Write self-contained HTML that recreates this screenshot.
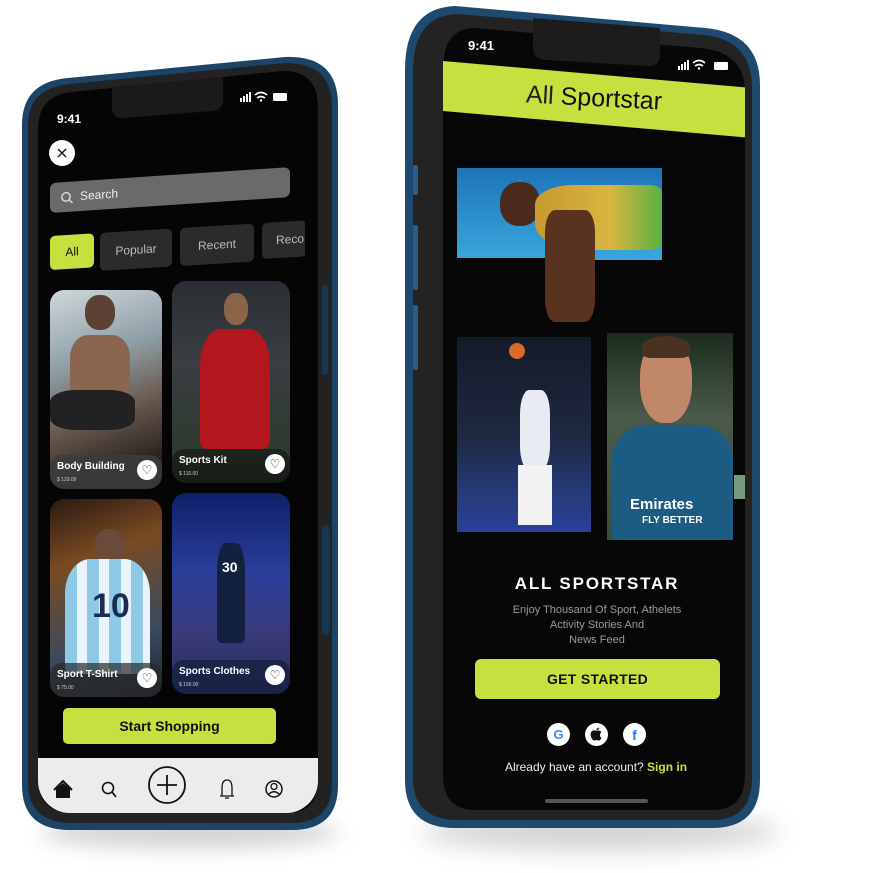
<!DOCTYPE html>
<html><head><meta charset="utf-8"><style>
*{margin:0;padding:0;box-sizing:border-box}
body{width:886px;height:873px;background:#fff;position:relative;overflow:hidden;font-family:"Liberation Sans",sans-serif}
.a{position:absolute}
.t{color:#fff;font-weight:bold}
.chip{position:absolute;background:#2b2b2b;color:#bbb;font-size:12px;border-radius:5px;display:flex;align-items:center;justify-content:center}
.card{position:absolute;border-radius:14px;overflow:hidden}
.lab{position:absolute;left:0;right:0;bottom:0;height:34px;background:rgba(60,60,60,.85);border-radius:12px}
.lab b{position:absolute;left:7px;top:6px;color:#fff;font-size:10px}
.lab i{position:absolute;left:7px;top:22px;color:#ccc;font-size:5px;font-style:normal}
.hrt{position:absolute;right:5px;top:5px;width:20px;height:20px;border-radius:50%;background:#fff;display:flex;align-items:center;justify-content:center}
.soc{position:absolute;width:23px;height:23px;border-radius:50%;background:#fff;display:flex;align-items:center;justify-content:center;font-weight:bold;font-size:13px}
</style></head><body>
<div class="a" style="left:40px;top:818px;width:300px;height:30px;border-radius:50%;background:rgba(0,0,0,.18);filter:blur(10px)"></div>
<div class="a" style="left:420px;top:815px;width:360px;height:35px;border-radius:50%;background:rgba(0,0,0,.18);filter:blur(12px)"></div>

<svg class="a" style="left:0;top:0" width="886" height="873">
<path d="M22 125 Q22 82 68 78 L285 57 Q338 55 338 105 L338 785 Q338 830 292 830 L70 830 Q22 830 22 785 Z" fill="#1c4466"/>
<path d="M28 125 Q28 88 70 84 L284 63 Q332 62 332 107 L332 782 Q332 823 292 823 L72 823 Q28 823 28 782 Z" fill="#222"/>
<path d="M38 130 Q38 95 72 92 L282 71 Q318 70 318 108 L318 780 Q318 813 286 813 L74 813 Q38 813 38 780 Z" fill="#050505"/>
<path d="M112 87 L223 77 L223 100 Q223 110 212 111 L124 118 Q112 119 112 108 Z" fill="#1a1a1a"/>
<rect x="322" y="285" width="6" height="90" rx="3" fill="#17364f"/>
<rect x="322" y="525" width="8" height="110" rx="4" fill="#17364f"/>
<path d="M405 70 Q405 8 455 6 L705 28 Q760 33 760 85 L760 780 Q760 828 712 828 L455 828 Q405 828 405 780 Z" fill="#1d4a6e"/>
<path d="M413 72 Q413 15 458 14 L704 35 Q752 40 752 88 L752 778 Q752 820 712 820 L458 820 Q413 820 413 778 Z" fill="#232323"/>
<path d="M443 70 Q443 28 475 28 L700 48 Q745 52 745 92 L745 775 Q745 810 712 810 L476 810 Q443 810 443 775 Z" fill="#070707"/>
<path d="M533 18 L660 28 L660 55 Q660 66 648 66 L546 60 Q533 59 533 48 Z" fill="#1c1c1c"/>
<rect x="413" y="165" width="5" height="30" rx="2" fill="#2c5d85"/>
<rect x="413" y="225" width="5" height="65" rx="2" fill="#2c5d85"/>
<rect x="413" y="305" width="5" height="65" rx="2" fill="#2c5d85"/>
</svg>

<div class="a t" style="left:57px;top:112px;font-size:12px">9:41</div>
<svg class="a" style="left:240px;top:90px" width="50" height="14"><rect x="0" y="8" width="2" height="4" fill="#fff"/><rect x="3" y="6" width="2" height="6" fill="#fff"/><rect x="6" y="4" width="2" height="8" fill="#fff"/><rect x="9" y="2" width="2" height="10" fill="#fff"/><path d="M15 5 Q21 0 27 5 M17 8 Q21 5 25 8" stroke="#fff" stroke-width="1.6" fill="none"/><circle cx="21" cy="10.5" r="1.2" fill="#fff"/><rect x="33" y="3" width="14" height="8" rx="1.5" fill="#fff"/></svg>
<div class="a" style="left:49px;top:140px;width:26px;height:26px;border-radius:50%;background:#fff"></div>
<svg class="a" style="left:49px;top:140px" width="26" height="26"><path d="M9 9 L17 17 M17 9 L9 17" stroke="#111" stroke-width="1.4"/></svg>
<div class="a" style="left:50px;top:183px;width:240px;height:30px;background:#6a6a6a;border-radius:6px;transform:skewY(-3.8deg);transform-origin:0 0">
  <svg class="a" style="left:10px;top:9px" width="14" height="14"><circle cx="6" cy="6" r="4.2" stroke="#ddd" stroke-width="1.4" fill="none"/><path d="M9 9 L12.5 12.5" stroke="#ddd" stroke-width="1.4"/></svg>
  <div class="a" style="left:30px;top:8px;color:#eee;font-size:12px">Search</div>
</div>
<div style="position:absolute;left:0;top:0;transform:skewY(-3.5deg);transform-origin:50px 250px">
<div class="chip" style="left:50px;top:236px;width:44px;height:34px;background:#c5e03f;color:#111">All</div>
<div class="chip" style="left:100px;top:236px;width:72px;height:38px">Popular</div>
<div class="chip" style="left:180px;top:236px;width:74px;height:38px">Recent</div>
<div class="chip" style="left:262px;top:236px;width:45px;height:36px;justify-content:flex-start;padding-left:14px">Reco</div>
</div>
<div class="a" style="left:305px;top:205px;width:13px;height:70px;background:#050505"></div>

<div class="card" style="left:50px;top:290px;width:112px;height:199px;background:linear-gradient(160deg,#cfd8dc 0%,#8e9ea6 35%,#6b5b50 60%,#2a2522 85%)">
<div class="a" style="left:35px;top:5px;width:30px;height:35px;border-radius:45%;background:#5c4234"></div>
<div class="a" style="left:20px;top:45px;width:60px;height:75px;border-radius:30%;background:#8a6650"></div>
<div class="a" style="left:0px;top:100px;width:85px;height:40px;border-radius:30%;background:#222"></div>
<div class="lab"><b>Body Building</b><i>$ 129.00</i><div class="hrt"><span style="font-size:12px;color:#222">♡</span></div></div></div>
<div class="card" style="left:172px;top:281px;width:118px;height:202px;background:linear-gradient(180deg,#2a2d33 0%,#3a3d42 40%,#2e3a2e 85%,#1c2a1a 100%)">
<div class="a" style="left:52px;top:12px;width:24px;height:32px;border-radius:45%;background:#8a6448"></div>
<div class="a" style="left:28px;top:48px;width:70px;height:120px;border-radius:30% 30% 8px 8px;background:#b3161d"></div>
<div class="lab" style="background:rgba(20,20,20,.6)"><b>Sports Kit</b><i>$ 110.00</i><div class="hrt"><span style="font-size:12px;color:#222">♡</span></div></div></div>
<div class="card" style="left:50px;top:499px;width:112px;height:198px;background:linear-gradient(160deg,#2a1a12 0%,#7a4a22 30%,#3a4a5e 70%,#1c2430 100%)">
<div class="a" style="left:45px;top:30px;width:30px;height:36px;border-radius:45%;background:#6a4a38"></div>
<div class="a" style="left:15px;top:60px;width:85px;height:115px;border-radius:30% 30% 8px 8px;background:repeating-linear-gradient(90deg,#8ec9e8 0 12px,#e8f4fa 12px 22px)"></div>
<div class="a t" style="left:42px;top:88px;font-size:34px;color:#1c2c50">10</div>
<div class="lab" style="background:rgba(40,40,40,.7)"><b>Sport T-Shirt</b><i>$ 75.00</i><div class="hrt"><span style="font-size:12px;color:#222">♡</span></div></div></div>
<div class="card" style="left:172px;top:493px;width:118px;height:201px;background:linear-gradient(180deg,#0e1f6a 0%,#2a3f9a 40%,#3a3a7a 70%,#24305a 100%)">
<div class="a" style="left:45px;top:50px;width:28px;height:100px;border-radius:30% 30% 5px 5px;background:#142040"></div>
<div class="a t" style="left:50px;top:66px;font-size:14px">30</div>
<div class="lab" style="background:rgba(20,30,60,.7)"><b>Sports Clothes</b><i>$ 156.00</i><div class="hrt"><span style="font-size:12px;color:#222">♡</span></div></div></div>

<div class="a" style="left:63px;top:708px;width:213px;height:36px;background:#c5e03f;border-radius:5px;text-align:center;line-height:36px;font-size:14px;font-weight:bold;color:#111">Start Shopping</div>

<div class="a" style="left:38px;top:758px;width:280px;height:55px;background:#ececec;border-radius:0 0 32px 32px"></div>
<svg class="a" style="left:38px;top:758px" width="280" height="60">
<path d="M18 40 L18 31 L25 25 L32 31 L32 40 Z" fill="#111"/><path d="M16 32 L25 23 L34 32" stroke="#111" stroke-width="2" fill="none"/>
<circle cx="70" cy="30" r="5.5" stroke="#111" stroke-width="1.6" fill="none"/><path d="M74 34 L78 39" stroke="#111" stroke-width="1.8"/>
<circle cx="129" cy="27" r="18" stroke="#111" stroke-width="1.8" fill="none"/><path d="M129 17 V37 M119 27 H139" stroke="#111" stroke-width="1.8"/>
<path d="M184 38 L184 30 Q184 22 189 22 Q194 22 194 30 L194 38 Z M182 38 H196 M187 40 H191" stroke="#111" stroke-width="1.3" fill="none"/>
<circle cx="236" cy="31" r="8" stroke="#111" stroke-width="1.5" fill="none"/><circle cx="236" cy="28.5" r="3" stroke="#111" stroke-width="1.3" fill="none"/><path d="M230.5 36.5 Q236 31 241.5 36.5" stroke="#111" stroke-width="1.3" fill="none"/>
</svg>

<div class="a t" style="left:468px;top:38px;font-size:13px">9:41</div>
<svg class="a" style="left:678px;top:58px" width="52" height="14"><rect x="0" y="8" width="2" height="4" fill="#fff"/><rect x="3" y="6" width="2" height="6" fill="#fff"/><rect x="6" y="4" width="2" height="8" fill="#fff"/><rect x="9" y="2" width="2" height="10" fill="#fff"/><path d="M15 5 Q21 0 27 5 M17 8 Q21 5 25 8" stroke="#fff" stroke-width="1.6" fill="none"/><circle cx="21" cy="10.5" r="1.2" fill="#fff"/><rect x="36" y="4" width="14" height="8" rx="1" fill="#fff"/></svg>
<div class="a" style="left:443px;top:61px;width:302px;height:50px;background:#c5e03f;transform:skewY(5deg);transform-origin:0 0"></div>
<div class="a" style="left:443px;top:84px;width:302px;text-align:center;font-size:25px;color:#111;transform:rotate(3deg)"><span style="color:#222">All</span> <span>Sportstar</span></div>

<div class="a" style="left:457px;top:168px;width:205px;height:92px;background:linear-gradient(180deg,#1e74b8,#39a7dd)"></div>
<div class="a" style="left:457px;top:258px;width:138px;height:64px;background:#060606"></div>
<div class="a" style="left:500px;top:182px;width:40px;height:44px;border-radius:45%;background:#4a2a1a"></div>
<div class="a" style="left:535px;top:185px;width:127px;height:65px;border-radius:30% 10% 10% 40%;background:linear-gradient(90deg,#c89a30,#d8b640 60%,#58b040)"></div>
<div class="a" style="left:545px;top:210px;width:50px;height:112px;border-radius:20%;background:#5a3220"></div>

<div class="a" style="left:457px;top:337px;width:134px;height:195px;background:linear-gradient(180deg,#141a2a 0%,#1e2840 50%,#263a78 80%,#2a3f9a 100%)"></div>
<div class="a" style="left:520px;top:390px;width:30px;height:80px;border-radius:30%;background:#e8ecf2"></div>
<div class="a" style="left:518px;top:465px;width:34px;height:60px;background:#f2f2f2"></div>
<div class="a" style="left:509px;top:343px;width:16px;height:16px;border-radius:50%;background:#d86a2a"></div>

<div class="a" style="left:607px;top:333px;width:126px;height:207px;background:linear-gradient(180deg,#1a2a1c,#4a5a4a 40%,#39503c)"></div>
<div class="a" style="left:640px;top:338px;width:52px;height:85px;border-radius:45%;background:#c08868"></div>
<div class="a" style="left:642px;top:336px;width:48px;height:22px;border-radius:50% 50% 20% 20%;background:#4a3222"></div>
<div class="a" style="left:612px;top:425px;width:121px;height:115px;border-radius:30% 30% 0 0;background:#1c5c82"></div>
<div class="a t" style="left:630px;top:496px;font-size:15px">Emirates</div>
<div class="a t" style="left:642px;top:515px;font-size:10px">FLY BETTER</div>
<div class="a" style="left:734px;top:475px;width:11px;height:24px;background:#7a9a80"></div>

<div class="a t" style="left:443px;top:574px;width:308px;text-align:center;font-size:17px;letter-spacing:1.8px">ALL SPORTSTAR</div>
<div class="a" style="left:443px;top:603px;width:308px;text-align:center;font-size:11px;line-height:15px;color:#9a9a9a">Enjoy Thousand Of Sport, Athelets<br>Activity Stories And<br>News Feed</div>
<div class="a" style="left:475px;top:659px;width:245px;height:40px;background:#c5e03f;border-radius:6px;text-align:center;line-height:40px;font-size:14px;font-weight:bold;color:#111;letter-spacing:.3px">GET STARTED</div>
<div class="soc" style="left:547px;top:723px;color:#4285f4">G</div>
<div class="soc" style="left:585px;top:723px"></div>
<svg class="a" style="left:588px;top:726px" width="17" height="17"><path d="M8.5 5 Q6 3.5 4 5 Q1.5 7.5 3.5 12 Q5 15 6.5 14.5 Q8.5 13.8 10.5 14.5 Q12 15 13.5 12 Q12 11 12 9 Q12 7 13.5 6 Q11.5 3.5 8.5 5 Z" fill="#111"/><path d="M8.5 4.5 Q8.5 2 11 1.5 Q11 4 8.5 4.5" fill="#111"/></svg>
<div class="soc" style="left:623px;top:723px;color:#1877f2;font-size:14px">f</div>
<div class="a" style="left:443px;top:760px;width:306px;text-align:center;font-size:12px;color:#eee">Already have an account? <b style="color:#c5e03f">Sign in</b></div>
<div class="a" style="left:545px;top:799px;width:103px;height:4px;border-radius:2px;background:#555"></div>
</body></html>
